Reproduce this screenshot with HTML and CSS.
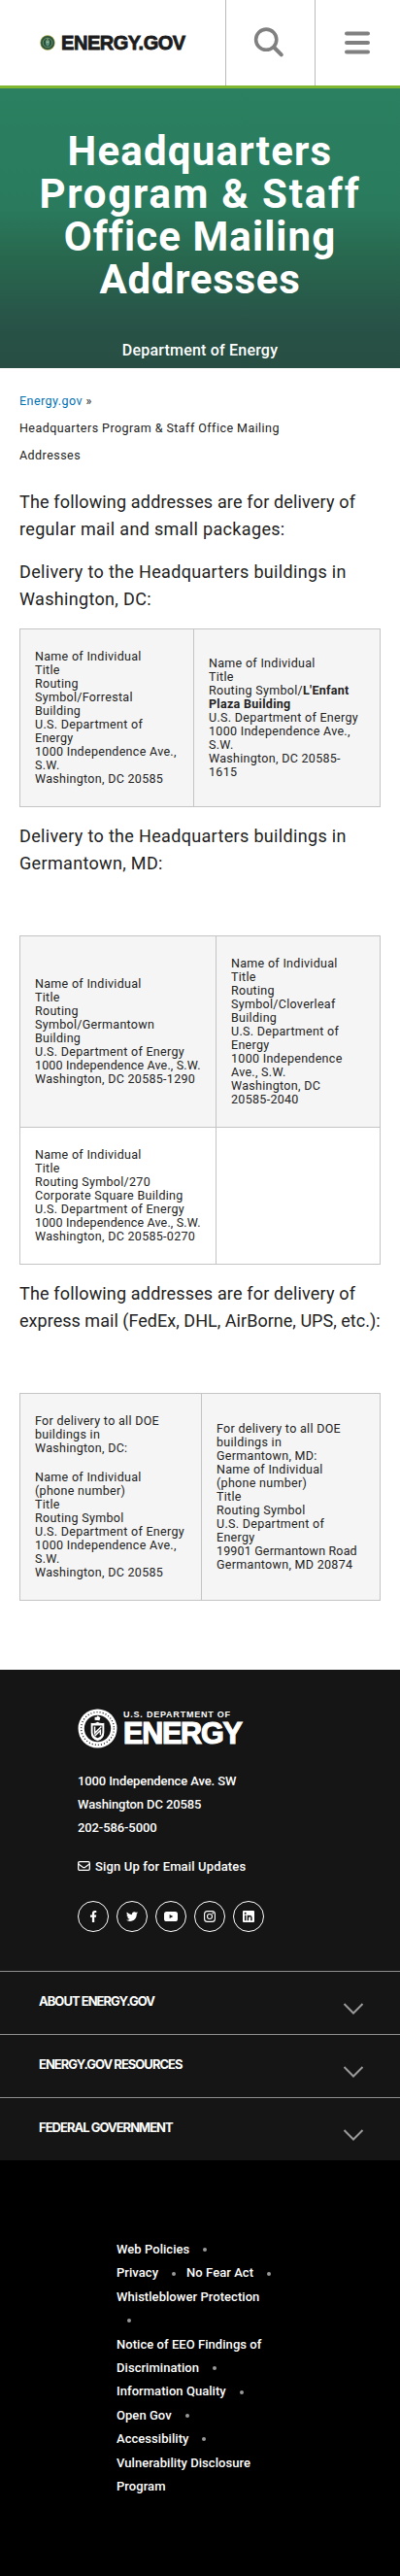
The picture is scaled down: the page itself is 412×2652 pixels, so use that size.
FILE: index.html
```html
<!DOCTYPE html>
<html lang="en">
<head>
<meta charset="utf-8">
<title>Headquarters Program &amp; Staff Office Mailing Addresses</title>
<link rel="stylesheet" href="styles.css">
</head>
<body>
<header class="top">
  <a class="brand">
    <svg class="seal" viewBox="0 0 16 16"><circle cx="8" cy="8" r="7.7" fill="#9a9a3c"/><circle cx="8" cy="8" r="7" fill="#28543f"/><circle cx="8" cy="8" r="4.8" fill="none" stroke="#7d9a70" stroke-width=".8"/><path d="M6 5.5h4v3.2q0 2-2 3-2-1-2-3z" fill="#5d9380"/><path d="M8 3.6v2M6.8 7.2h2.4" stroke="#d5d9a0" stroke-width=".8"/></svg>
    <span class="brand-name">ENERGY.GOV</span>
  </a>
  <span class="tool tool-search"><svg width="32" height="32" viewBox="0 0 32 32"><circle cx="13.2" cy="12.7" r="10.6" fill="none" stroke="#808080" stroke-width="3.6"/><path d="M21 20.5l7.8 7.8" stroke="#808080" stroke-width="4" stroke-linecap="round"/></svg></span>
  <span class="tool tool-menu"><svg width="28" height="24" viewBox="0 0 28 24"><path d="M3 2.5h22M3 12h22M3 21.5h22" stroke="#808080" stroke-width="4" stroke-linecap="round"/></svg></span>
</header>
<section class="hero">
  <h1 class="hero-title"><span class="t1">Headquarters</span><br><span class="t2">Program &amp; Staff</span><br><span class="t3">Office Mailing</span><br><span class="t4">Addresses</span></h1>
  <p class="hero-sub">Department of Energy</p>
</section>
<main class="main">
  <nav class="crumbs"><a class="link">Energy.gov</a> »<br>Headquarters Program &amp; Staff Office Mailing<br>Addresses</nav>
  <p class="lead"><span class="snug">The following addresses are for delivery of</span><br>regular mail and small packages:</p>
  <p class="lead">Delivery to the Headquarters buildings in<br>Washington, DC:</p>
  <table class="addresses one">
    <tr><td class="first">Name of Individual<br>Title<br>Routing<br>Symbol/Forrestal<br>Building<br>U.S. Department of<br>Energy<br>1000 Independence Ave.,<br>S.W.<br>Washington, DC 20585</td>
    <td>Name of Individual<br>Title<br>Routing Symbol/<b>L'Enfant<br>Plaza Building</b><br>U.S. Department of Energy<br>1000 Independence Ave.,<br>S.W.<br>Washington, DC 20585-<br>1615</td></tr>
  </table>
  <p class="lead">Delivery to the Headquarters buildings in<br>Germantown, MD:</p>
  <table class="addresses two">
    <tr class="upper"><td class="first">Name of Individual<br>Title<br>Routing<br>Symbol/Germantown<br>Building<br>U.S. Department of Energy<br><span class="tight">1000 Independence Ave., S.W.</span><br>Washington, DC 20585-1290</td>
    <td>Name of Individual<br>Title<br>Routing<br>Symbol/Cloverleaf<br>Building<br>U.S. Department of<br>Energy<br>1000 Independence<br>Ave., S.W.<br>Washington, DC<br>20585-2040</td></tr>
    <tr class="plain"><td>Name of Individual<br>Title<br>Routing Symbol/270<br>Corporate Square Building<br>U.S. Department of Energy<br><span class="tight">1000 Independence Ave., S.W.</span><br>Washington, DC 20585-0270</td><td></td></tr>
  </table>
  <p class="lead"><span class="snug">The following addresses are for delivery of</span><br><span class="long">express mail (FedEx, DHL, AirBorne, UPS, etc.):</span></p>
  <table class="addresses three">
    <tr><td class="first"><p class="to">For delivery to all DOE<br>buildings in<br>Washington, DC:</p>Name of Individual<br>(phone number)<br>Title<br>Routing Symbol<br>U.S. Department of Energy<br>1000 Independence Ave.,<br>S.W.<br>Washington, DC 20585</td>
    <td>For delivery to all DOE<br>buildings in<br>Germantown, MD:<br>Name of Individual<br>(phone number)<br>Title<br>Routing Symbol<br>U.S. Department of<br>Energy<br><span class="tight">19901 Germantown Road</span><br>Germantown, MD 20874</td></tr>
  </table>
</main>
<footer class="footer">
  <div class="contact">
    <div class="doe">
      <svg class="doe-seal" viewBox="0 0 42 42"><circle cx="21" cy="21" r="20.5" fill="#fff"/><circle cx="21" cy="21" r="17.3" fill="none" stroke="#151515" stroke-width="1.4" stroke-dasharray="1 2.2"/><circle cx="21" cy="21" r="14" fill="#151515"/><path d="M14 15q4 1 7-1 3 2 7 1v10q0 7-7 9-7-2-7-9z" fill="#fff"/><path d="M16 18h10v7q0 4-5 6-5-2-5-6z" fill="#151515"/><path d="M18 19v7l7-7M18 29l6-6v5" stroke="#fff" stroke-width="1.5" fill="none"/><path d="M18 12V9h2l1-1.5 3 2-1 3z" fill="#fff"/></svg>
      <div class="doe-words"><span class="doe-small">U.S. DEPARTMENT OF</span><span class="doe-big">ENERGY</span></div>
    </div>
    <address class="street">1000 Independence Ave. SW<br>Washington DC 20585<br>202-586-5000</address>
    <a class="signup"><svg width="13" height="10" viewBox="0 0 13 10"><rect x=".7" y=".7" width="11.6" height="8.6" rx="1.2" fill="none" stroke="#fff" stroke-width="1.3"/><path d="M.8 3l4.5 3.2q1.2.8 2.4 0L12.2 3" fill="none" stroke="#fff" stroke-width="1.2"/></svg><span>Sign Up for Email Updates</span></a>
    <div class="social">
      <a class="disc"><svg viewBox="0 0 12 12"><path d="M4.9 12V6.8H3V4.6h1.9V3c0-1.9 1.1-3 2.8-3 .8 0 1.6.2 1.6.2V2h-.9c-.9 0-1.2.6-1.2 1.1v1.5h2l-.3 2.2H7.2V12z" fill="#fff"/></svg></a>
      <a class="disc"><svg viewBox="0 0 512 512"><path d="M459 152c0 4 0 9 0 14 0 139-106 299-299 299-59 0-115-17-160-47 8 1 16 1 25 1 49 0 94-16 130-45-46-1-85-31-98-73 6 1 13 2 20 2 9 0 19-1 28-4-48-10-84-52-84-103v-1c14 8 30 13 47 13-28-19-46-51-46-87 0-19 5-37 14-53 52 64 129 105 216 110-1-8-2-16-2-24C250 96 297 49 355 49c30 0 57 13 77 33 23-4 46-13 66-25-8 25-24 45-46 58 21-2 42-8 60-16-14 21-32 39-53 53z" fill="#fff"/></svg></a>
      <a class="disc"><svg class="wide" viewBox="0 0 14 12"><rect y="1" width="14" height="10" rx="2.6" fill="#fff"/><path d="M5.6 3.9v4.2L9.3 6z" fill="#151515"/></svg></a>
      <a class="disc"><svg viewBox="0 0 12 12"><rect x=".6" y=".6" width="10.8" height="10.8" rx="3" fill="none" stroke="#fff" stroke-width="1.1"/><circle cx="6" cy="6" r="2.5" fill="none" stroke="#fff" stroke-width="1.1"/><circle cx="9.2" cy="2.8" r=".8" fill="#fff"/></svg></a>
      <a class="disc"><svg viewBox="0 0 12 12"><rect width="12" height="12" rx="1" fill="#fff"/><path d="M2.7 4.8v5.4M5.4 10.2V4.8M5.7 7.3q0-1.8 1.6-1.8t1.6 1.8v2.9" stroke="#151515" stroke-width="1.5" fill="none"/><circle cx="2.7" cy="2.7" r="1" fill="#151515"/></svg></a>
    </div>
  </div>
  <div class="fold"><span>ABOUT ENERGY.GOV</span><svg viewBox="0 0 22 14"><path d="M1.5 2l9.5 9.5L20.5 2" fill="none" stroke="#999" stroke-width="2"/></svg></div>
  <div class="fold"><span>ENERGY.GOV RESOURCES</span><svg viewBox="0 0 22 14"><path d="M1.5 2l9.5 9.5L20.5 2" fill="none" stroke="#999" stroke-width="2"/></svg></div>
  <div class="fold"><span>FEDERAL GOVERNMENT</span><svg viewBox="0 0 22 14"><path d="M1.5 2l9.5 9.5L20.5 2" fill="none" stroke="#999" stroke-width="2"/></svg></div>
</footer>
<section class="legal">
  <div>Web Policies<i class="dot"></i></div>
  <div>Privacy<i class="dot"></i><span class="next">No Fear Act</span><i class="dot"></i></div>
  <div>Whistleblower Protection</div>
  <div class="alone"><i class="dot"></i></div>
  <div>Notice of EEO Findings of</div>
  <div>Discrimination<i class="dot"></i></div>
  <div>Information Quality<i class="dot"></i></div>
  <div>Open Gov<i class="dot"></i></div>
  <div>Accessibility<i class="dot"></i></div>
  <div>Vulnerability Disclosure</div>
  <div>Program</div>
</section>
</body>
</html>
```
FILE: styles.css
```css
* { box-sizing: border-box; }
body { margin: 0; width: 412px; background: #fff; color: #222; font-family: Roboto, "Liberation Sans", sans-serif; }
p, h1 { margin: 0; }
.top { height: 91px; display: flex; border-bottom: 3px solid #82b831; }
.brand { width: 232px; display: flex; align-items: center; gap: 6px; padding-left: 41px; }
.seal { width: 16px; height: 16px; }
.brand-name { font: bold 20px/20px "Liberation Sans", Arial, sans-serif; letter-spacing: -.45px; color: #1c1c1c; -webkit-text-stroke: .8px #1c1c1c; white-space: nowrap; }
.tool { border-left: 1px solid #bbb; }
.tool-search { width: 92px; padding: 28px 0 0 28px; }
.tool-menu { width: 88px; padding: 32px 0 0 29px; }
.tool svg { display: block; }
.hero { height: 288px; padding-top: 43px; text-align: center; color: #fff; background: linear-gradient(#2a8060 0%, #2a7b5e 42%, #28684f 60%, #285247 85%, #284e43 100%); }
.hero-title { height: 176px; font-size: 42px; line-height: 44px; font-weight: 700; white-space: nowrap; }
.t1 { letter-spacing: 1.2px; }
.t2 { letter-spacing: 1.8px; }
.t3 { letter-spacing: 1.1px; }
.t4 { letter-spacing: .7px; }
.hero-sub { margin-top: 39px; font-size: 16px; line-height: 24px; font-weight: 500; letter-spacing: .2px; }
.main { height: 1340px; padding: 20px 20px 0; }
.crumbs { font-size: 12.5px; line-height: 28px; letter-spacing: .45px; margin-bottom: 20px; white-space: nowrap; }
.link { color: #0071b3; }
.lead { font-size: 18px; line-height: 28px; letter-spacing: .33px; margin-bottom: 16px; white-space: nowrap; }
.snug { letter-spacing: .16px; }
.long { letter-spacing: .03px; }
.addresses { width: 372px; table-layout: fixed; border-collapse: collapse; margin-bottom: 16px; }
.addresses td { padding: 0 0 0 15px; border: 1px solid #c4c4c4; background: #f5f5f5; font-size: 12.5px; line-height: 14px; letter-spacing: .3px; vertical-align: middle; white-space: nowrap; }
.addresses .plain td { background: #fff; }
.tight { letter-spacing: .16px; }
.one { height: 184px; }
.one .first { width: 179px; }
.two { height: 339px; margin-top: 60px; }
.two .first { width: 202px; }
.two .upper { height: 197px; }
.three { height: 214px; margin-top: 60px; }
.three .first { width: 187px; }
.to { margin-bottom: 16px; }
.footer { height: 505px; background: #151515; color: #fff; }
.contact { height: 310px; padding: 39px 0 0 80px; }
.doe { display: flex; gap: 6px; height: 43px; }
.doe-seal { width: 41px; height: 43px; }
.doe-words { font-family: "Liberation Sans", Arial, sans-serif; font-weight: bold; white-space: nowrap; }
.doe-small { display: block; font-size: 9px; line-height: 10px; letter-spacing: .78px; padding-top: 2px; }
.doe-big { display: block; font-size: 30.5px; line-height: 29px; letter-spacing: -1.2px; -webkit-text-stroke: 1.2px #fff; }
.street { margin-top: 21px; font-style: normal; font-size: 13px; font-weight: 500; line-height: 24px; letter-spacing: -.1px; }
.signup { margin-top: 15px; height: 24px; display: flex; align-items: center; gap: 5px; font-size: 13px; font-weight: 500; letter-spacing: .15px; }
.social { margin-top: 24px; display: flex; gap: 8px; }
.disc { width: 32px; height: 32px; border: 1px solid #fff; border-radius: 50%; display: flex; align-items: center; justify-content: center; }
.disc svg { width: 12px; height: 12px; }
.disc .wide { width: 14px; }
.fold { height: 65px; border-top: 1px solid #8f8f8f; padding: 0 37px 0 40px; display: flex; justify-content: space-between; align-items: center; font: bold 13px/20px Inter, sans-serif; letter-spacing: -.98px; }
.fold span { padding-bottom: 4px; }
.fold svg { width: 22px; height: 14px; margin-top: 11px; }
.legal { height: 428px; background: #000; color: #fff; padding: 80px 0 0 120px; font-size: 13px; font-weight: 500; line-height: 24.4px; letter-spacing: .05px; white-space: nowrap; }
.legal div { height: 24.4px; display: flex; align-items: center; }
.dot { width: 4px; height: 4px; border-radius: 50%; background: #999; margin-left: 14px; }
.alone .dot { margin-left: 11px; }
.next { margin-left: 11px; }
```
